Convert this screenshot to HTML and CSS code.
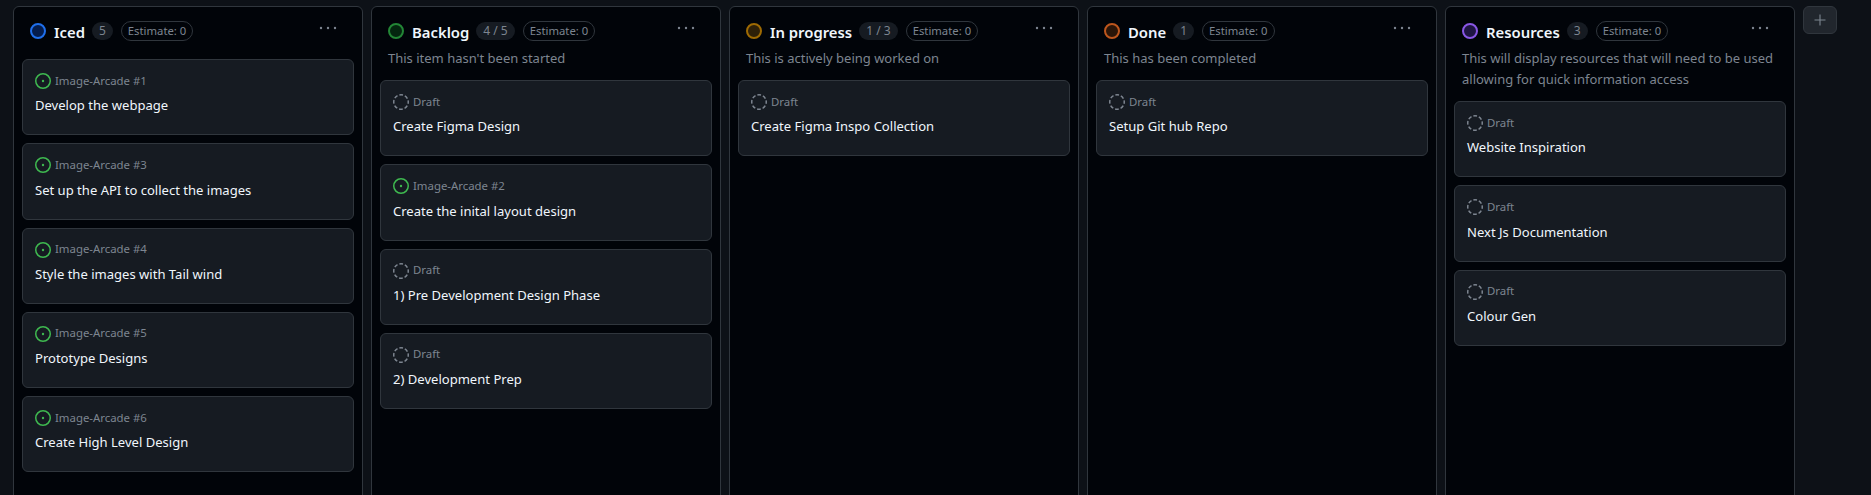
FILE: index.html
```html
<!DOCTYPE html>
<html lang="en">
<head>
    <meta charset="UTF-8">
    <meta name="viewport" content="width=device-width, initial-scale=1.0">
    <title>Image-Arcade board</title>
    <link rel="stylesheet" href="styles.css">
</head>
<body>
    <svg class="icon-defs" aria-hidden="true">
        <symbol id="issue-open" viewBox="0 0 16 16">
            <circle cx="8" cy="8" r="7.25" fill="none" stroke="currentColor" stroke-width="1.5"/>
            <circle cx="8" cy="8" r="1.2" fill="currentColor"/>
        </symbol>
        <symbol id="issue-draft" viewBox="0 0 16 16">
            <circle cx="8" cy="8" r="7.25" fill="none" stroke="currentColor" stroke-width="1.5" stroke-dasharray="3.7 1.99" stroke-dashoffset="1.85"/>
        </symbol>
        <symbol id="dots" viewBox="0 0 18 4">
            <circle cx="2" cy="2" r="1.2" fill="currentColor"/>
            <circle cx="9" cy="2" r="1.2" fill="currentColor"/>
            <circle cx="16" cy="2" r="1.2" fill="currentColor"/>
        </symbol>
    </svg>

    <div class="board">
        <section class="column">
            <header class="column-header">
                <div class="column-top">
                    <span class="status status-blue"></span>
                    <h2 class="column-name">Iced</h2>
                    <span class="count">5</span>
                    <span class="estimate">Estimate: 0</span>
                    <svg class="menu-dots"><use href="#dots"/></svg>
                </div>
                <p class="column-desc"></p>
            </header>
            <div class="cards">
                <article class="card">
                    <div class="card-meta"><svg class="card-icon open"><use href="#issue-open"/></svg><span class="card-repo">Image-Arcade #1</span></div>
                    <div class="card-title">Develop the webpage</div>
                </article>
                <article class="card">
                    <div class="card-meta"><svg class="card-icon open"><use href="#issue-open"/></svg><span class="card-repo">Image-Arcade #3</span></div>
                    <div class="card-title">Set up the API to collect the images</div>
                </article>
                <article class="card">
                    <div class="card-meta"><svg class="card-icon open"><use href="#issue-open"/></svg><span class="card-repo">Image-Arcade #4</span></div>
                    <div class="card-title">Style the images with Tail wind</div>
                </article>
                <article class="card">
                    <div class="card-meta"><svg class="card-icon open"><use href="#issue-open"/></svg><span class="card-repo">Image-Arcade #5</span></div>
                    <div class="card-title">Prototype Designs</div>
                </article>
                <article class="card">
                    <div class="card-meta"><svg class="card-icon open"><use href="#issue-open"/></svg><span class="card-repo">Image-Arcade #6</span></div>
                    <div class="card-title">Create High Level Design</div>
                </article>
            </div>
        </section>

        <section class="column">
            <header class="column-header">
                <div class="column-top">
                    <span class="status status-green"></span>
                    <h2 class="column-name">Backlog</h2>
                    <span class="count">4 / 5</span>
                    <span class="estimate">Estimate: 0</span>
                    <svg class="menu-dots"><use href="#dots"/></svg>
                </div>
                <p class="column-desc">This item hasn't been started</p>
            </header>
            <div class="cards">
                <article class="card">
                    <div class="card-meta"><svg class="card-icon draft"><use href="#issue-draft"/></svg><span class="card-repo">Draft</span></div>
                    <div class="card-title">Create Figma Design</div>
                </article>
                <article class="card">
                    <div class="card-meta"><svg class="card-icon open"><use href="#issue-open"/></svg><span class="card-repo">Image-Arcade #2</span></div>
                    <div class="card-title">Create the inital layout design</div>
                </article>
                <article class="card">
                    <div class="card-meta"><svg class="card-icon draft"><use href="#issue-draft"/></svg><span class="card-repo">Draft</span></div>
                    <div class="card-title">1) Pre Development Design Phase</div>
                </article>
                <article class="card">
                    <div class="card-meta"><svg class="card-icon draft"><use href="#issue-draft"/></svg><span class="card-repo">Draft</span></div>
                    <div class="card-title">2) Development Prep</div>
                </article>
            </div>
        </section>

        <section class="column">
            <header class="column-header">
                <div class="column-top">
                    <span class="status status-yellow"></span>
                    <h2 class="column-name">In progress</h2>
                    <span class="count">1 / 3</span>
                    <span class="estimate">Estimate: 0</span>
                    <svg class="menu-dots"><use href="#dots"/></svg>
                </div>
                <p class="column-desc">This is actively being worked on</p>
            </header>
            <div class="cards">
                <article class="card">
                    <div class="card-meta"><svg class="card-icon draft"><use href="#issue-draft"/></svg><span class="card-repo">Draft</span></div>
                    <div class="card-title">Create Figma Inspo Collection</div>
                </article>
            </div>
        </section>

        <section class="column">
            <header class="column-header">
                <div class="column-top">
                    <span class="status status-orange"></span>
                    <h2 class="column-name">Done</h2>
                    <span class="count">1</span>
                    <span class="estimate">Estimate: 0</span>
                    <svg class="menu-dots"><use href="#dots"/></svg>
                </div>
                <p class="column-desc">This has been completed</p>
            </header>
            <div class="cards">
                <article class="card">
                    <div class="card-meta"><svg class="card-icon draft"><use href="#issue-draft"/></svg><span class="card-repo">Draft</span></div>
                    <div class="card-title">Setup Git hub Repo</div>
                </article>
            </div>
        </section>

        <section class="column">
            <header class="column-header">
                <div class="column-top">
                    <span class="status status-purple"></span>
                    <h2 class="column-name">Resources</h2>
                    <span class="count">3</span>
                    <span class="estimate">Estimate: 0</span>
                    <svg class="menu-dots"><use href="#dots"/></svg>
                </div>
                <p class="column-desc">This will display resources that will need to be used allowing for quick information access</p>
            </header>
            <div class="cards">
                <article class="card">
                    <div class="card-meta"><svg class="card-icon draft"><use href="#issue-draft"/></svg><span class="card-repo">Draft</span></div>
                    <div class="card-title">Website Inspiration</div>
                </article>
                <article class="card">
                    <div class="card-meta"><svg class="card-icon draft"><use href="#issue-draft"/></svg><span class="card-repo">Draft</span></div>
                    <div class="card-title">Next Js Documentation</div>
                </article>
                <article class="card">
                    <div class="card-meta"><svg class="card-icon draft"><use href="#issue-draft"/></svg><span class="card-repo">Draft</span></div>
                    <div class="card-title">Colour Gen</div>
                </article>
            </div>
        </section>

        <button class="add-column" aria-label="New column">
            <svg class="add-icon" viewBox="0 0 12 12"><path d="M6 0.5v11M0.5 6h11" fill="none" stroke="currentColor" stroke-width="1.1"/></svg>
        </button>
    </div>
</body>
</html>
```

FILE: styles.css
```css
html, body {
    height: 100%;
}

body {
    background-color: #0d1117;
    font-family: "Noto Sans", "Open Sans", sans-serif;
    color: #e6edf3;
    margin: 0;
    overflow: hidden;
}

.icon-defs {
    display: none;
}

.board {
    display: flex;
    align-items: flex-start;
    gap: 8px;
    height: 100%;
    box-sizing: border-box;
    padding: 6px 0 0 13px;
    overflow: hidden;
}

.column {
    width: 350px;
    height: 520px;
    box-sizing: border-box;
    flex-shrink: 0;
    background-color: #010409;
    border: 1px solid #30363d;
    border-radius: 6px;
}

.column-header {
    padding: 14px 16px 11px;
}

.column-top {
    display: flex;
    align-items: center;
    height: 20px;
}

.status {
    width: 16px;
    height: 16px;
    box-sizing: border-box;
    border-radius: 50%;
    border: 2px solid;
    margin-right: 8px;
    flex-shrink: 0;
}

.status-blue {
    border-color: #1f6feb;
    background-color: #051d4d;
}

.status-green {
    border-color: #238636;
    background-color: #04260f;
}

.status-yellow {
    border-color: #9e6a03;
    background-color: #2e2008;
}

.status-orange {
    border-color: #bd561d;
    background-color: #2a1508;
}

.status-purple {
    border-color: #8957e5;
    background-color: #1f1543;
}

.column-name {
    font-size: 14.85px;
    line-height: 20px;
    font-weight: 600;
    margin: 1px 7px 0 0;
    color: #f0f6fc;
}

.count {
    font-size: 12px;
    line-height: 18px;
    padding: 0 7px;
    border-radius: 9px;
    color: #7d8590;
    background-color: #161b22;
    margin-right: 8px;
}

.estimate {
    font-size: 11.3px;
    line-height: 18px;
    padding: 0 6px;
    border: 1px solid #30363d;
    border-radius: 10px;
    color: #7d8590;
}

.menu-dots {
    width: 18px;
    height: 4px;
    margin-left: auto;
    margin-right: 9px;
    margin-bottom: 6px;
    color: #7d8590;
}

.column-desc {
    font-size: 13px;
    line-height: 21px;
    margin: 7px 0 0;
    color: #7d8590;
}

.column-desc:empty {
    height: 0;
}

.cards {
    display: flex;
    flex-direction: column;
    gap: 8px;
    padding: 0 8px;
}

.card {
    background-color: #161b22;
    border: 1px solid #30363d;
    border-radius: 6px;
    padding: 13px 12px 18px;
}

.card-meta {
    display: flex;
    align-items: center;
    gap: 4px;
    height: 16px;
    font-size: 11.4px;
    color: #7d8590;
}

.card-repo {
    margin-bottom: 2px;
}

.card-icon {
    width: 16px;
    height: 16px;
}

.card-icon.open {
    color: #3fb950;
}

.card-icon.draft {
    color: #7d8590;
}

.card-title {
    font-size: 13.05px;
    line-height: 21px;
    margin-top: 6.25px;
    color: #f0f6fc;
}

.add-column {
    display: flex;
    align-items: center;
    justify-content: center;
    width: 34px;
    height: 28px;
    padding: 0;
    flex-shrink: 0;
    background-color: #21262d;
    border: 1px solid #30363d;
    border-radius: 6px;
    color: #7d8590;
}

.add-icon {
    width: 12px;
    height: 12px;
}
```
